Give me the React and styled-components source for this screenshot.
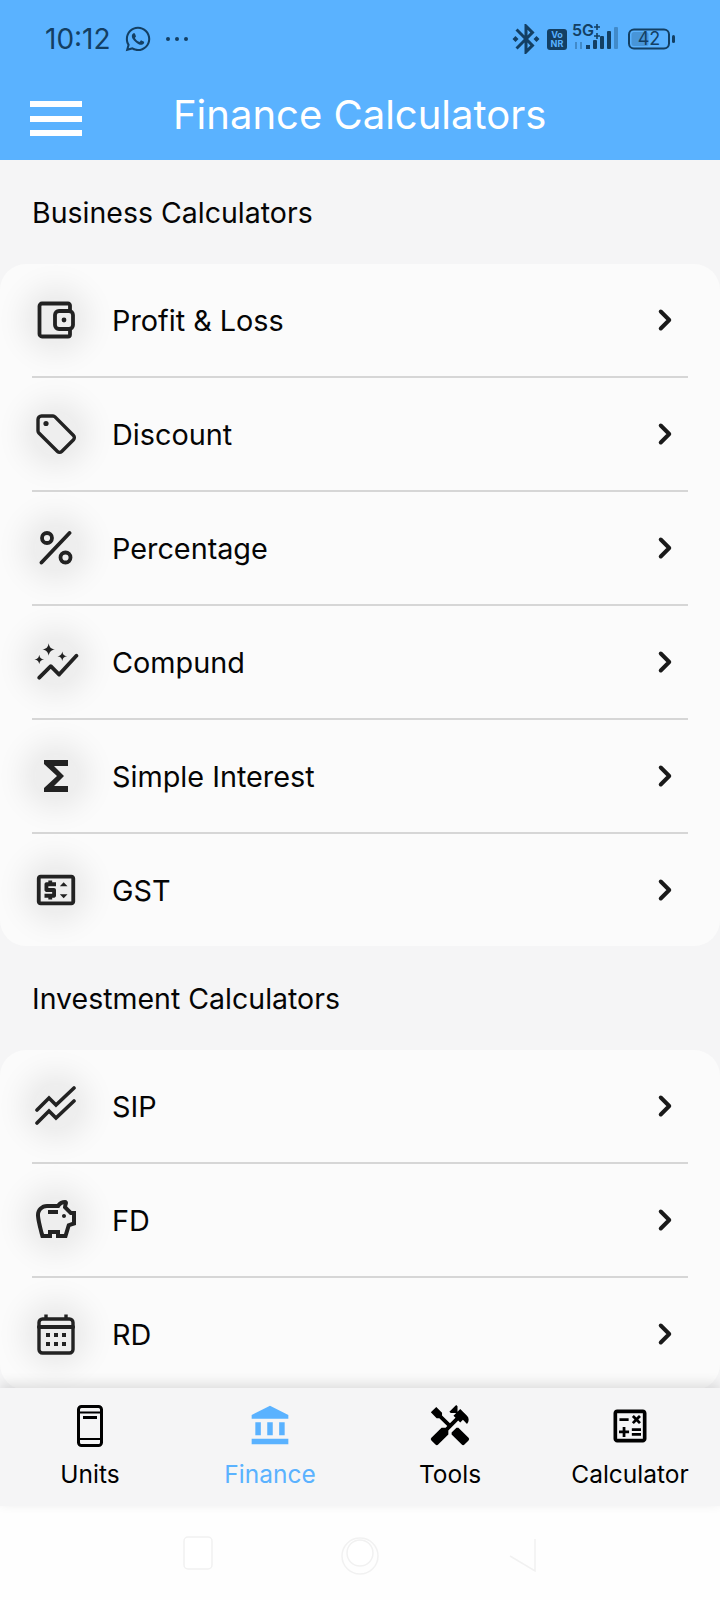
import styled, { createGlobalStyle } from 'styled-components'
import { ChevronRight } from 'lucide-react'
import {
  MdAccountBalance,
  MdBluetoothConnected,
  MdFunctions,
  MdHandyman,
  MdOutlineCalculate,
  MdOutlinePriceChange,
  MdOutlineSavings,
} from 'react-icons/md'
import { FaWhatsapp } from 'react-icons/fa'

const GlobalStyle = createGlobalStyle`
  html, body { margin: 0; padding: 0; }
  body { font-family: Inter, "Noto Sans", "Liberation Sans", sans-serif; background: #f5f5f6; }
`

const Phone = styled.div`
  width: 720px;
  height: 1600px;
  display: flex;
  flex-direction: column;
  overflow: hidden;
  background: #f5f5f6;
`

const Header = styled.header`
  height: 160px;
  flex: none;
  background: #5ab2ff;
  display: flex;
  flex-direction: column;
`

const StatusBar = styled.div`
  height: 78px;
  padding: 0 44px 0 45px;
  display: flex;
  align-items: center;
  color: #133f63;
`

const Time = styled.span`
  font-size: 28px;
  line-height: 1;
  margin-right: 13px;
`

const Dots = styled.span`
  display: flex;
  gap: 5px;
  margin-left: 14px;
  i {
    width: 4px;
    height: 4px;
    border-radius: 50%;
    background: #133f63;
  }
`

const StatusRight = styled.div`
  margin-left: auto;
  display: flex;
  align-items: center;
`

const AppBar = styled.div`
  flex: 1;
  display: flex;
  align-items: flex-start;
  padding: 23px 0 0 30px;
`

const Burger = styled.div`
  width: 52px;
  height: 35px;
  margin-right: 91px;
  display: flex;
  flex-direction: column;
  justify-content: space-between;
  i {
    height: 6px;
    background: #fff;
  }
`

const Title = styled.h1`
  margin: 0;
  color: #fff;
  font-size: 40px;
  font-weight: 400;
  line-height: 28px;
`

const Content = styled.main`
  flex: 1;
  min-height: 0;
  overflow: hidden;
`

const SectionTitle = styled.h2`
  margin: 0;
  height: 104px;
  padding-left: 32px;
  display: flex;
  align-items: center;
  font-size: 28.500px;
  font-weight: 430;
  color: #050505;
`

const Card = styled.section`
  background: #fbfbfb;
  border-radius: 26px;
  padding: 0 32px;
`

const Row = styled.div`
  height: 112px;
  display: flex;
  align-items: center;
  border-bottom: ${(p) => (p.$last ? 'none' : '2px solid #d6d6d6')};
`

const IconBox = styled.div`
  width: 42px;
  height: 42px;
  margin-left: 3px;
  margin-right: 35px;
  display: flex;
  align-items: center;
  justify-content: center;
  background: rgba(0, 0, 0, 0.05);
  border-radius: 50%;
  box-shadow: 0 0 30px 12px rgba(0, 0, 0, 0.08);
  color: #222;
  flex: none;
  svg {
    flex: none;
  }
`

const Label = styled.span`
  flex: 1;
  font-size: 28.800px;
  font-weight: 430;
  color: #050505;
`

const Chevron = styled(ChevronRight)`
  margin-right: 6px;
  color: #1a1a1a;
`

const BottomNav = styled.nav`
  position: relative;
  height: 118px;
  flex: none;
  display: grid;
  grid-template-columns: repeat(4, 180px);
  background: #f5f5f6;
  box-shadow: 0 -4px 12px rgba(0, 0, 0, 0.12);
`

const Tab = styled.div`
  display: flex;
  flex-direction: column;
  align-items: center;
  color: ${(p) => (p.$active ? '#5ab2ff' : '#000')};
`

const TabIcon = styled.div`
  height: 44px;
  margin-top: 16px;
  display: flex;
  align-items: center;
  justify-content: center;
`

const TabLabel = styled.span`
  margin-top: 10px;
  font-size: 24.500px;
  line-height: 32px;
`

const SystemNav = styled.div`
  height: 94px;
  flex: none;
  background: #fefefe;
  display: flex;
  justify-content: center;
  align-items: flex-start;
  padding-top: 23px;
  box-sizing: border-box;
`

const strokeProps = {
  fill: 'none',
  stroke: 'currentColor',
  strokeLinecap: 'round',
  strokeLinejoin: 'round',
}

const WalletIcon = () => (
  <svg width="38" height="38" viewBox="0 0 38 38" {...strokeProps} strokeWidth="3.800">
    <path d="M33 9V4.500A2 2 0 0 0 31 2.500H5A2.500 2.500 0 0 0 2.500 5v28A2.500 2.500 0 0 0 5 35.500h26a2 2 0 0 0 2-2V28" />
    <rect x="18" y="10" width="18" height="18" rx="4" />
    <circle cx="27" cy="19" r="2.400" fill="currentColor" stroke="none" />
  </svg>
)

const TagIcon = () => (
  <svg width="42" height="42" viewBox="0 0 42 42" {...strokeProps} strokeWidth="3.400">
    <path d="M3 6.500A3.500 3.500 0 0 1 6.500 3H18a3 3 0 0 1 2 .9L38.500 22.500a3 3 0 0 1 0 4.200L26.700 38.500a3 3 0 0 1-4.200 0L3.900 20A3 3 0 0 1 3 18z" />
    <circle cx="11" cy="10.500" r="2.600" fill="currentColor" stroke="none" />
  </svg>
)

const PercentIcon = () => (
  <svg width="34" height="34" viewBox="0 0 34 34" {...strokeProps} strokeWidth="3.800">
    <path d="M30.500 2 2.500 31.500" />
    <circle cx="8" cy="7" r="5" />
    <circle cx="26.500" cy="26.500" r="5" />
  </svg>
)

const CompoundIcon = () => (
  <svg width="46" height="38" viewBox="0 0 44 36" {...strokeProps} strokeWidth="3.600">
    <path d="M6 33 17 22l8 8L41.500 12" />
    <path
      d="M15 0c.8 4 2 5.200 6 6-4 .8-5.200 2-6 6-.8-4-2-5.200-6-6 4-.8 5.200-2 6-6zM28 8c.6 3 1.500 3.900 4.600 4.500-3.100.6-4 1.500-4.600 4.500-.6-3-1.500-3.900-4.600-4.500 3.100-.6 4-1.500 4.600-4.500zM6 11c.6 3 1.500 3.900 4.600 4.500-3.100.6-4 1.500-4.600 4.500-.6-3-1.500-3.900-4.600-4.500 3.100-.6 4-1.500 4.600-4.500z"
      fill="currentColor"
      stroke="none"
    />
  </svg>
)

const DoubleTrendIcon = () => (
  <svg width="42" height="40" viewBox="0 0 42 40" {...strokeProps} strokeWidth="3.600" strokeLinejoin="miter">
    <path d="M2 24 14 12l7 7L39 2" />
    <path d="M2 37 14 25l7 7L39 15" />
  </svg>
)

const CalendarIcon = () => (
  <svg width="38" height="42" viewBox="0 0 38 42" {...strokeProps} strokeWidth="3.400">
    <path d="M9 1.500V7M29 1.500V7" strokeLinecap="butt" />
    <rect x="2" y="6" width="34" height="34" rx="3.500" />
    <path d="M2 14h34" strokeWidth="4" />
    <g fill="currentColor" stroke="none">
      <rect x="9" y="20" width="4" height="4" />
      <rect x="17" y="20" width="4" height="4" />
      <rect x="25" y="20" width="4" height="4" />
      <rect x="9" y="29" width="4" height="4" />
      <rect x="17" y="29" width="4" height="4" />
      <rect x="25" y="29" width="4" height="4" />
    </g>
  </svg>
)

const PhoneIcon = () => (
  <svg width="26" height="42" viewBox="0 0 26 42">
    <rect x="1.500" y="1.500" width="23" height="39" rx="3" fill="none" stroke="#000" strokeWidth="3" />
    <rect x="1.500" y="6.500" width="23" height="2" fill="#000" />
    <rect x="6" y="11" width="14" height="3" fill="#000" />
    <rect x="1.500" y="33" width="23" height="2" fill="#000" />
  </svg>
)

const Battery = () => (
  <svg width="48" height="22" viewBox="0 0 48 22">
    <rect x="1" y="1.500" width="40" height="19" rx="5" fill="none" stroke="#133f63" strokeWidth="2" />
    <rect x="3.500" y="4" width="17" height="14" rx="2.500" fill="#133f63" opacity="0.25" />
    <rect x="44" y="7" width="3" height="8" rx="1.500" fill="#133f63" />
  </svg>
)

const BatteryWrap = styled.div`
  position: relative;
  display: flex;
  margin-left: 8px;
`

const BatteryText = styled.span`
  position: absolute;
  left: 1px;
  top: 0;
  width: 40px;
  text-align: center;
  font-size: 18px;
  line-height: 22px;
  color: #133f63;
`

const VoNr = styled.div`
  width: 20px;
  height: 21px;
  margin-left: 3px;
  border-radius: 3px;
  background: #133f63;
  color: #5ab2ff;
  font-size: 9px;
  font-weight: 700;
  line-height: 9.500px;
  text-align: center;
  padding-top: 1px;
  box-sizing: border-box;
`

const Signal = styled.div`
  width: 48px;
  height: 26px;
  margin: -4px 0 0 5px;
  position: relative;
  color: #133f63;
`

const FiveG = styled.span`
  position: absolute;
  left: 0;
  top: -2px;
  font-size: 16px;
  font-weight: 600;
  line-height: 16px;
`

const SignalIcon = () => (
  <svg width="48" height="26" viewBox="0 0 48 26">
    <path d="M4 18v7M9 18v7" stroke="#133f63" strokeOpacity="0.35" strokeWidth="2" />
    <path d="M25 0v6M22 3h6M25 9v6M22 12h6" stroke="#133f63" strokeWidth="1.600" />
    <rect x="14" y="21" width="4" height="4" fill="#133f63" />
    <rect x="21" y="16" width="4" height="9" rx="1" fill="#133f63" />
    <rect x="28" y="12" width="4" height="13" rx="1" fill="#133f63" />
    <rect x="35" y="7" width="4" height="18" rx="1" fill="#133f63" />
    <rect x="42" y="3" width="4" height="22" rx="1" fill="#133f63" opacity="0.35" />
  </svg>
)

const SystemButtons = () => (
  <svg width="370" height="46" viewBox="0 0 370 46" fill="#fff" stroke="#f1f1f1" strokeWidth="1.500">
    <rect x="9" y="8" width="28" height="32" rx="4" />
    <circle cx="185" cy="27" r="18" fill="none" />
    <circle cx="185" cy="24" r="13" />
    <path d="M360 10v32L335 27" fill="none" />
  </svg>
)

const sections = [
  {
    title: 'Business Calculators',
    items: [
      { name: 'Profit & Loss', icon: <WalletIcon /> },
      { name: 'Discount', icon: <TagIcon /> },
      { name: 'Percentage', icon: <PercentIcon /> },
      { name: 'Compund', icon: <CompoundIcon /> },
      { name: 'Simple Interest', icon: <MdFunctions size={48} /> },
      { name: 'GST', icon: <MdOutlinePriceChange size={46} /> },
    ],
  },
  {
    title: 'Investment Calculators',
    items: [
      { name: 'SIP', icon: <DoubleTrendIcon /> },
      { name: 'FD', icon: <MdOutlineSavings size={48} /> },
      { name: 'RD', icon: <CalendarIcon /> },
    ],
  },
]

const tabs = [
  { name: 'Units', icon: <PhoneIcon /> },
  { name: 'Finance', icon: <MdAccountBalance size={44} />, active: true },
  { name: 'Tools', icon: <MdHandyman size={46} /> },
  { name: 'Calculator', icon: <MdOutlineCalculate size={44} /> },
]

const App = () => {
  return (
    <Phone>
      <GlobalStyle />
      <Header>
        <StatusBar>
          <Time>10:12</Time>
          <FaWhatsapp size={28} />
          <Dots>
            <i />
            <i />
            <i />
          </Dots>
          <StatusRight>
            <MdBluetoothConnected size={36} />
            <VoNr>
              Vo
              <br />
              NR
            </VoNr>
            <Signal>
              <FiveG>5G</FiveG>
              <SignalIcon />
            </Signal>
            <BatteryWrap>
              <Battery />
              <BatteryText>42</BatteryText>
            </BatteryWrap>
          </StatusRight>
        </StatusBar>
        <AppBar>
          <Burger>
            <i />
            <i />
            <i />
          </Burger>
          <Title>Finance Calculators</Title>
        </AppBar>
      </Header>
      <Content>
        {sections.map((section) => (
          <div key={section.title}>
            <SectionTitle>{section.title}</SectionTitle>
            <Card>
              {section.items.map((item, i) => (
                <Row key={item.name} $last={i === section.items.length - 1}>
                  <IconBox>{item.icon}</IconBox>
                  <Label>{item.name}</Label>
                  <Chevron size={34} strokeWidth={2.8} />
                </Row>
              ))}
            </Card>
          </div>
        ))}
      </Content>
      <BottomNav>
        {tabs.map((tab) => (
          <Tab key={tab.name} $active={tab.active}>
            <TabIcon>{tab.icon}</TabIcon>
            <TabLabel>{tab.name}</TabLabel>
          </Tab>
        ))}
      </BottomNav>
      <SystemNav>
        <SystemButtons />
      </SystemNav>
    </Phone>
  )
}

export default App
